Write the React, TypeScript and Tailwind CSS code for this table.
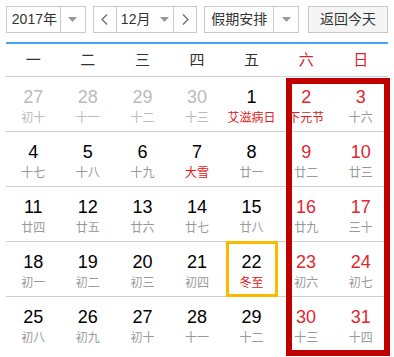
import React from "react";

type Day = {
  n: number;
  lunar: string;
  other?: boolean;
  fest?: boolean;
  today?: boolean;
};

const weekdays = ["一", "二", "三", "四", "五", "六", "日"];

const weeks: Day[][] = [
  [
    { n: 27, lunar: "初十", other: true },
    { n: 28, lunar: "十一", other: true },
    { n: 29, lunar: "十二", other: true },
    { n: 30, lunar: "十三", other: true },
    { n: 1, lunar: "艾滋病日", fest: true },
    { n: 2, lunar: "下元节", fest: true },
    { n: 3, lunar: "十六" },
  ],
  [
    { n: 4, lunar: "十七" },
    { n: 5, lunar: "十八" },
    { n: 6, lunar: "十九" },
    { n: 7, lunar: "大雪", fest: true },
    { n: 8, lunar: "廿一" },
    { n: 9, lunar: "廿二" },
    { n: 10, lunar: "廿三" },
  ],
  [
    { n: 11, lunar: "廿四" },
    { n: 12, lunar: "廿五" },
    { n: 13, lunar: "廿六" },
    { n: 14, lunar: "廿七" },
    { n: 15, lunar: "廿八" },
    { n: 16, lunar: "廿九" },
    { n: 17, lunar: "三十" },
  ],
  [
    { n: 18, lunar: "初一" },
    { n: 19, lunar: "初二" },
    { n: 20, lunar: "初三" },
    { n: 21, lunar: "初四" },
    { n: 22, lunar: "冬至", fest: true, today: true },
    { n: 23, lunar: "初六" },
    { n: 24, lunar: "初七" },
  ],
  [
    { n: 25, lunar: "初八" },
    { n: 26, lunar: "初九" },
    { n: 27, lunar: "初十" },
    { n: 28, lunar: "十一" },
    { n: 29, lunar: "十二" },
    { n: 30, lunar: "十三" },
    { n: 31, lunar: "十四" },
  ],
];

const cjk = "font-['Liberation_Sans','Noto_Sans_CJK_SC',sans-serif]";

function Caret() {
  return (
    <svg width="9" height="5" viewBox="0 0 9 5">
      <path d="M0 0h9L4.5 5z" fill="#999" />
    </svg>
  );
}

export default function App() {
  return (
    <div className={`relative w-[394px] h-[357px] bg-white px-[6px] pt-[6px] ${cjk}`}>
      {/* Toolbar */}
      <div className="flex items-center h-[27px] text-[14px] text-[#333]">
        <div className="flex w-[80px] h-[27px] border border-[#c8c8c8] bg-white">
          <div className="flex-1 flex items-center justify-center pl-[2px]">2017年</div>
          <div className="w-[25px] border-l border-[#c8c8c8] flex items-center justify-center">
            <Caret />
          </div>
        </div>
        <div className="flex ml-[7px] w-[105px] h-[27px] border border-[#c8c8c8] bg-white">
          <div className="w-[23px] border-r border-[#c8c8c8] flex items-center justify-center">
            <svg width="7" height="11" viewBox="0 0 7 11">
              <path d="M6 0.5L1 5.5l5 5" stroke="#666" strokeWidth="1.2" fill="none" />
            </svg>
          </div>
          <div className="flex-1 flex items-center justify-center gap-[10px]">
            <span>12月</span>
            <Caret />
          </div>
          <div className="w-[23px] border-l border-[#c8c8c8] flex items-center justify-center">
            <svg width="7" height="11" viewBox="0 0 7 11">
              <path d="M1 0.5l5 5-5 5" stroke="#666" strokeWidth="1.2" fill="none" />
            </svg>
          </div>
        </div>
        <div className="flex ml-[7px] w-[95px] h-[27px] border border-[#c8c8c8] bg-white">
          <div className="flex-1 flex items-center justify-center">假期安排</div>
          <div className="w-[25px] border-l border-[#c8c8c8] flex items-center justify-center">
            <Caret />
          </div>
        </div>
        <div className="ml-[9px] w-[80px] h-[27px] border border-[#c8c8c8] bg-[#f5f5f5] flex items-center justify-center">
          返回今天
        </div>
      </div>

      {/* Blue rule */}
      <div className="mt-[9px] h-[2px] w-[382px] bg-[#4aa4f0]" />

      {/* Weekdays */}
      <div className="grid grid-cols-7 w-[382px] h-[33px] border-b border-[#cfcfcf] text-[15px]">
        {weekdays.map((w, i) => (
          <div
            key={w}
            className={`flex items-center justify-center ${i >= 5 ? "text-[#e02020]" : "text-[#333]"}`}
          >
            {w}
          </div>
        ))}
      </div>

      {/* Days */}
      <div className="w-[382px]">
        {weeks.map((week, r) => (
          <div
            key={r}
            className={`grid grid-cols-7 h-[55px] ${r < weeks.length - 1 ? "border-b border-[#cfcfcf]" : ""}`}
          >
            {week.map((d, c) => {
              const weekend = c >= 5;
              const numColor = d.other ? "text-[#bbbbbb]" : weekend ? "text-[#e4262e]" : "text-black";
              const lunarColor = d.fest ? "text-[#e02020]" : d.other ? "text-[#bbbbbb]" : "text-[#999]";
              return (
                <div key={c} className="relative flex flex-col items-center pt-[9px]">
                  {d.today && (
                    <div className="absolute left-[2px] right-[1px] -top-px -bottom-px border-[3px] border-[#fbb900]" />
                  )}
                  <div className={`text-[18px] leading-[22px] ${numColor}`}>{d.n}</div>
                  <div className={`mt-[2px] text-[12px] leading-[16px] whitespace-nowrap ${lunarColor}`}>
                    {d.lunar}
                  </div>
                </div>
              );
            })}
          </div>
        ))}
      </div>

      {/* Weekend highlight */}
      <div className="absolute left-[286px] top-[78px] w-[104px] h-[278px] border-[6px] border-[#c00000] pointer-events-none" />
    </div>
  );
}
